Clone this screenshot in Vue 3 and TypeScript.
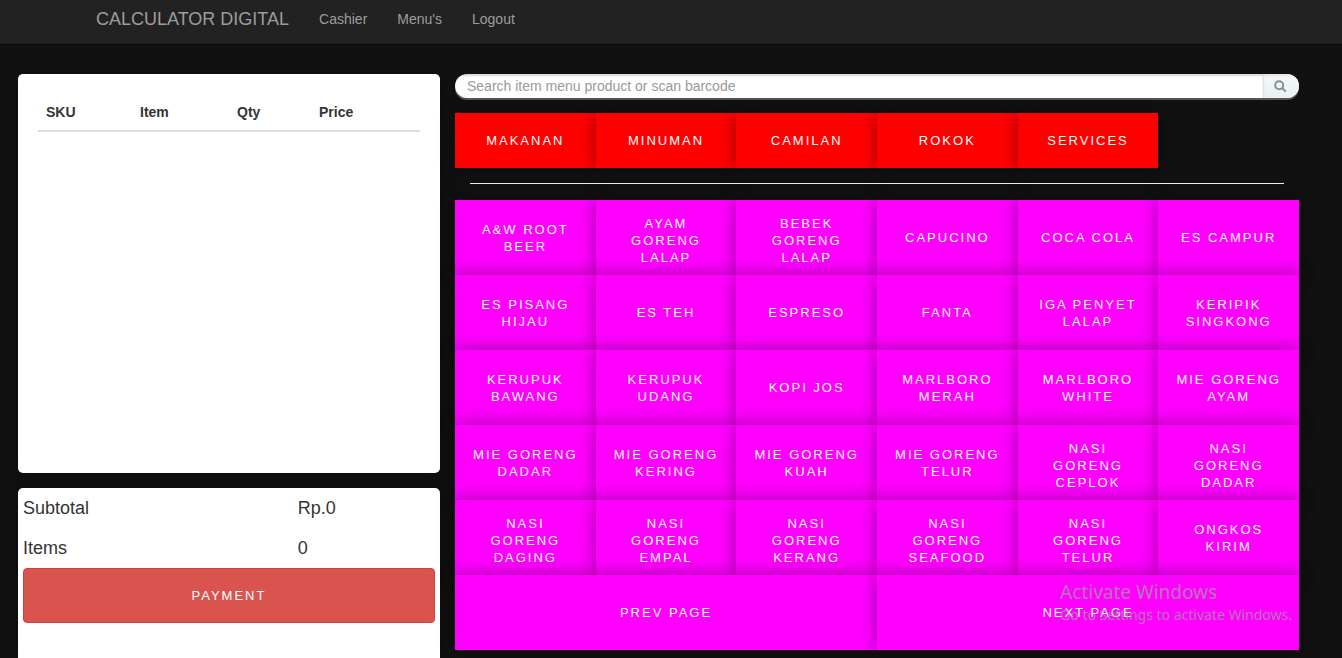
<script setup lang="ts">
import { ref } from 'vue'

const search = ref('')
const columns: string[] = ['SKU', 'Item', 'Qty', 'Price']
const links: string[] = ['Cashier', "Menu's", 'Logout']
const categories: string[] = ['Makanan', 'Minuman', 'Camilan', 'Rokok', 'Services']
const products: string[] = [
  'A&W Root Beer', 'Ayam Goreng Lalap', 'Bebek Goreng Lalap', 'Capucino', 'Coca Cola', 'Es Campur',
  'Es Pisang Hijau', 'Es Teh', 'Espreso', 'Fanta', 'Iga Penyet Lalap', 'Keripik Singkong',
  'Kerupuk Bawang', 'Kerupuk Udang', 'Kopi Jos', 'Marlboro Merah', 'Marlboro White', 'Mie Goreng Ayam',
  'Mie Goreng Dadar', 'Mie Goreng Kering', 'Mie Goreng Kuah', 'Mie Goreng Telur', 'Nasi Goreng Ceplok', 'Nasi Goreng Dadar',
  'Nasi Goreng Daging', 'Nasi Goreng Empal', 'Nasi Goreng Kerang', 'Nasi Goreng Seafood', 'Nasi Goreng Telur', 'Ongkos Kirim',
]
</script>

<template>
  <div class="page">
    <nav class="navbar">
      <a class="brand" href="#">CALCULATOR DIGITAL</a>
      <a v-for="link in links" :key="link" class="nav-link" href="#">{{ link }}</a>
    </nav>

    <main class="layout">
      <div class="side">
        <section class="card cart">
          <table>
            <thead>
              <tr>
                <th v-for="column in columns" :key="column" scope="col">{{ column }}</th>
              </tr>
            </thead>
          </table>
        </section>
        <section class="card summary">
          <dl>
            <dt>Subtotal</dt>
            <dd>Rp.0</dd>
            <dt>Items</dt>
            <dd>0</dd>
          </dl>
          <button class="tile payment" type="button">Payment</button>
        </section>
      </div>

      <div class="menu">
        <form class="search" role="search" @submit.prevent>
          <input
            v-model="search"
            type="text"
            aria-label="Search item menu product or scan barcode"
            placeholder="Search item menu product or scan barcode"
          />
          <button type="submit" aria-label="Search">
            <svg viewBox="0 0 13 13" aria-hidden="true">
              <circle cx="5.2" cy="5.2" r="4" />
              <path d="M8.2 8.2 L11.8 11.6" />
            </svg>
          </button>
        </form>
        <div class="grid categories">
          <button v-for="name in categories" :key="name" class="tile category" type="button">{{ name }}</button>
        </div>
        <hr />
        <div class="grid">
          <button v-for="name in products" :key="name" class="tile product" type="button">{{ name }}</button>
          <button class="tile product pager" type="button">Prev Page</button>
          <button class="tile product pager" type="button">Next Page</button>
        </div>
      </div>
    </main>

    <aside class="activation">
      <p class="activation-title">Activate Windows</p>
      <p>Go to Settings to activate Windows.</p>
    </aside>
  </div>
</template>

<style>
body {
  margin: 0;
  background: #111;
}
</style>

<style scoped>
.page,
.page * {
  box-sizing: border-box;
}

.page {
  display: flex;
  flex-direction: column;
  min-height: 100vh;
  color: #333;
  background: #111;
  font-family: "Liberation Sans", Arial, sans-serif;
  font-size: 14px;
  line-height: 20px;
}

.navbar {
  display: flex;
  align-items: flex-start;
  gap: 30px;
  height: 45px;
  padding: 9px 96px 0;
  background: #222;
  border-bottom: 1px solid #080808;
}

.navbar a {
  color: #9d9d9d;
  text-decoration: none;
}

.brand {
  font-size: 18px;
}

.layout {
  flex: 1;
  display: grid;
  grid-template-columns: minmax(0, 1fr) minmax(0, 2fr);
  gap: 15px;
  padding: 29px 43px 0 18px;
}

.side {
  display: flex;
  flex-direction: column;
  gap: 15px;
}

.card {
  background: #fff;
  border-radius: 5px;
  box-shadow: 0 0 16px rgba(0, 0, 0, 0.3);
}

.cart {
  min-height: 399px;
  padding: 20px;
}

table {
  width: 100%;
  border-collapse: collapse;
}

th {
  padding: 8px;
  text-align: left;
  border-bottom: 2px solid #ddd;
}

th:nth-child(1) {
  width: 94px;
}

th:nth-child(2) {
  width: 97px;
}

th:nth-child(3) {
  width: 82px;
}

.summary {
  flex: 1;
  padding: 0 5px;
  border-radius: 5px 5px 0 0;
}

dl {
  display: grid;
  grid-template-columns: 2fr 1fr;
  margin: 0;
  font-size: 18px;
  line-height: 40px;
}

dd {
  margin: 0;
}

.tile {
  padding: 0 15px;
  border: 0;
  color: #fff;
  font-family: inherit;
  font-size: 13px;
  line-height: 17px;
  letter-spacing: 2px;
  text-transform: uppercase;
  cursor: pointer;
}

.payment {
  width: 100%;
  height: 55px;
  background: #d9534f;
  border: 1px solid #d43f3a;
  border-radius: 4px;
}

.menu {
  padding-bottom: 8px;
}

.search {
  display: flex;
  height: 24px;
  margin-bottom: 15px;
  overflow: hidden;
  background: #fff;
  border-radius: 12px;
  box-shadow: 0 2px 0 #555;
}

.search input {
  flex: 1;
  min-width: 0;
  padding: 0 12px;
  border: 0;
  outline: 0;
  background: transparent;
  box-shadow: inset 0 2px 2px rgba(0, 0, 0, 0.15);
  font: inherit;
  color: #555;
}

.search input::placeholder {
  color: #999;
  opacity: 1;
}

.search button {
  display: flex;
  align-items: center;
  width: 36px;
  padding: 0 10px;
  border: 0;
  border-left: 1px solid #dce4e8;
  background: linear-gradient(#f5f8fa, #e9eff2);
  box-shadow: inset 0 2px 2px rgba(0, 0, 0, 0.08);
}

.search svg {
  width: 13px;
  height: 13px;
  fill: none;
  stroke: #899093;
  stroke-width: 2;
}

.grid {
  display: grid;
  grid-template-columns: repeat(6, minmax(0, 1fr));
}

.category {
  height: 55px;
  background: #f00;
  box-shadow: 0 0 16px rgba(0, 0, 0, 0.4);
}

.product {
  height: 75px;
  padding-top: 15px;
  padding-bottom: 15px;
  background: #f0f;
  box-shadow: 0 0 16px rgba(0, 0, 0, 0.4);
}

.pager {
  grid-column: span 3;
}

hr {
  margin: 15px 15px 16px;
  border: 0;
  border-top: 1px solid #eee;
}

.activation {
  position: fixed;
  right: 50px;
  bottom: 32px;
  color: rgba(160, 160, 160, 0.75);
  font-family: "Noto Sans", "Open Sans", sans-serif;
  pointer-events: none;
}

.activation p {
  margin: 0;
  line-height: 22px;
}

.activation .activation-title {
  font-size: 19px;
  line-height: 24px;
}
</style>
